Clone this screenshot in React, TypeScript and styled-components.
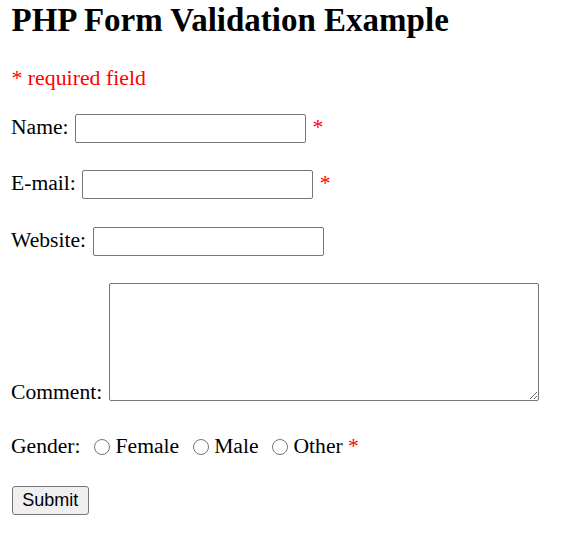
import React from "react";
import styled, { createGlobalStyle } from "styled-components";

const GlobalStyle = createGlobalStyle`
  html, body { margin: 0; padding: 0; background: #ffffff; }
  body { font-family: "Liberation Serif", "Times New Roman", serif; color: #000000; }
`;

const Page = styled.div`
  padding: 2px 11px 0 11px;
  font-family: "Liberation Serif", "Times New Roman", serif;
  font-size: 21.6px;
  line-height: 24px;
`;

const Title = styled.h2`
  margin: 0 0 0 0.5px;
  font-size: 33px;
  line-height: 36px;
  font-weight: bold;
`;

const Note = styled.p`
  margin: 28px 0 0 0.5px;
  color: #ff0000;
  font-size: 21.8px;
`;

const Form = styled.form`
  display: flex;
  flex-direction: column;
  align-items: flex-start;
`;

const Row = styled.div<{ $top: number; $align?: string }>`
  display: flex;
  align-items: ${(p) => p.$align || "baseline"};
  gap: 6.5px;
  margin-top: ${(p) => p.$top}px;
`;

const Label = styled.span<{ $lh?: number }>`
  white-space: nowrap;
  line-height: ${(p) => (p.$lh ? `${p.$lh}px` : "24px")};
`;

const Star = styled.span`
  color: #ff0000;
`;

const TextInput = styled.input`
  box-sizing: border-box;
  width: 231px;
  height: 29px;
  margin: 0;
  padding: 1px 2px;
  border: 1px solid #767676;
  border-radius: 2px;
  font-family: "Liberation Sans", Arial, sans-serif;
  font-size: 18px;
  background: #ffffff;
  outline: none;
`;

const TextArea = styled.textarea`
  box-sizing: border-box;
  width: 430px;
  height: 118px;
  margin: 0;
  padding: 2px;
  border: 1px solid #767676;
  border-radius: 2px;
  font-family: "Liberation Mono", monospace;
  font-size: 18px;
  resize: both;
  background: #ffffff;
  outline: none;
`;

const GenderRow = styled.div`
  display: flex;
  align-items: center;
  margin-top: 32.7px;
`;

const Option = styled.label`
  display: flex;
  align-items: center;
  gap: 5.5px;
  margin-left: 13.5px;
  white-space: nowrap;
`;

const Radio = styled.input`
  appearance: none;
  -webkit-appearance: none;
  box-sizing: border-box;
  width: 16px;
  height: 16px;
  margin: 2px 0 0 0;
  border: 1px solid #767676;
  border-radius: 50%;
  background: #ffffff;
`;

const GenderStar = styled(Star)`
  margin-left: 5.4px;
`;

const SubmitButton = styled.button`
  box-sizing: border-box;
  height: 29px;
  margin: 28.3px 0 0 0.7px;
  padding: 0 9.6px;
  border: 1px solid #767676;
  border-radius: 3px;
  background: #efefef;
  color: #000000;
  font-family: "Liberation Sans", Arial, sans-serif;
  font-size: 18px;
  line-height: 20px;
`;

export default function App() {
  return (
    <>
      <GlobalStyle />
      <Page>
        <Title>PHP Form Validation Example</Title>
        <Note>* required field</Note>
        <Form onSubmit={(e) => e.preventDefault()}>
          <Row $top={24}>
            <Label>Name:</Label>
            <TextInput type="text" name="name" />
            <Star>*</Star>
          </Row>
          <Row $top={27.3}>
            <Label>E-mail:</Label>
            <TextInput type="text" name="email" />
            <Star>*</Star>
          </Row>
          <Row $top={27.3}>
            <Label>Website:</Label>
            <TextInput type="text" name="website" />
          </Row>
          <Row $top={27.4} $align="flex-end">
            <Label $lh={18.4}>Comment:</Label>
            <TextArea name="comment" rows={5} cols={40} />
          </Row>
          <GenderRow>
            <Label>Gender:</Label>
            <Option>
              <Radio type="radio" name="gender" value="female" />
              Female
            </Option>
            <Option>
              <Radio type="radio" name="gender" value="male" />
              Male
            </Option>
            <Option>
              <Radio type="radio" name="gender" value="other" />
              Other
            </Option>
            <GenderStar>*</GenderStar>
          </GenderRow>
          <SubmitButton type="submit">Submit</SubmitButton>
        </Form>
      </Page>
    </>
  );
}
